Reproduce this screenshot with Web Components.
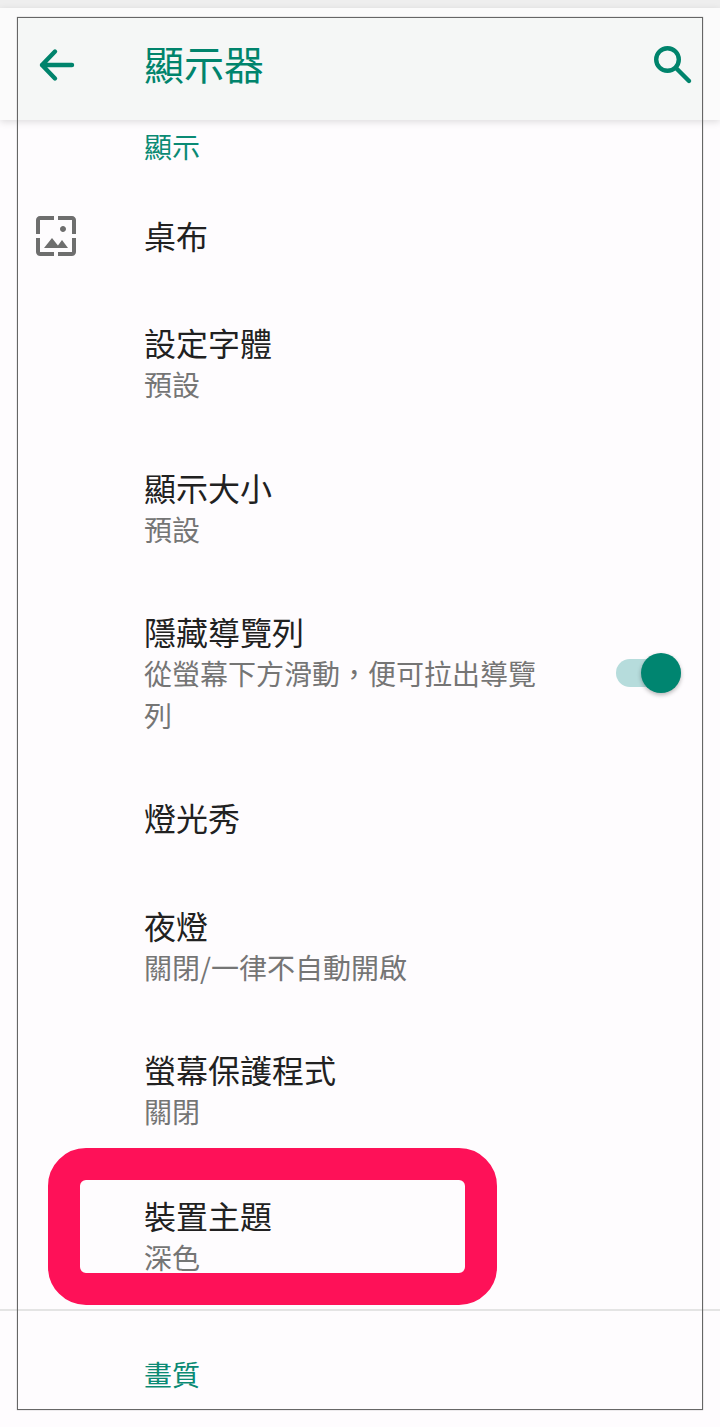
<!DOCTYPE html>
<html lang="zh-Hant">
<head>
<meta charset="utf-8">
<title>顯示器</title>
<style>
    html, body {
        margin: 0;
        padding: 0;
        background: #fefcfe;
    }
    body {
        position: relative;
        width: 720px;
        height: 1427px;
        overflow: hidden;
        font-family: "Noto Sans CJK TC", "Noto Sans", sans-serif;
    }
</style>
</head>
<body>
<display-screen>
    <app-bar title="顯示器"></app-bar>
    <section-label>顯示</section-label>
    <setting-row title="桌布" pad="35">
        <svg slot="icon" style="margin-top: 2px" width="48" height="48" viewBox="0 0 24 24" fill="#6e6e6e"><path d="M4 4h7V2H4c-1.1 0-2 .9-2 2v7h2V4zm6 9l-4 5h12l-3-4-2.03 2.71L10 13zm7-4.5c0-.83-.67-1.5-1.5-1.5S14 7.67 14 8.5s.67 1.5 1.5 1.5S17 9.33 17 8.5zM20 2h-7v2h7v7h2V4c0-1.1-.9-2-2-2zm0 18h-7v2h7c1.1 0 2-.9 2-2v-7h-2v7zM4 13H2v7c0 1.1.9 2 2 2h7v-2H4v-7z"/></svg>
    </setting-row>
    <setting-row title="設定字體" summary="預設"></setting-row>
    <setting-row title="顯示大小" summary="預設"></setting-row>
    <setting-row title="隱藏導覽列" summary="從螢幕下方滑動，便可拉出導覽列">
        <toggle-switch slot="end"></toggle-switch>
    </setting-row>
    <setting-row title="燈光秀" pad="29.5" pad-bottom="35.5"></setting-row>
    <setting-row title="夜燈" summary="關閉/一律不自動開啟"></setting-row>
    <setting-row title="螢幕保護程式" summary="關閉"></setting-row>
    <setting-row title="裝置主題" summary="深色" pad="31.5" pad-bottom="30.5"></setting-row>
    <section-label divided>畫質</section-label>
</display-screen>
<screen-frame></screen-frame>
<highlight-box></highlight-box>

<script>
class DisplayScreen extends HTMLElement {
    constructor() {
        super();
        this.attachShadow({ mode: 'open' });
        this.shadowRoot.innerHTML = `
            <style>
                :host {
                    display: block;
                    padding-top: 8px;
                    background: linear-gradient(#eeeeee, #eeeeee) top / 100% 8px no-repeat;
                }
            </style>
            <slot></slot>
        `;
    }
}

class AppBar extends HTMLElement {
    constructor() {
        super();
        this.attachShadow({ mode: 'open' });
        this.shadowRoot.innerHTML = `
            <style>
                :host {
                    display: flex;
                    align-items: center;
                    position: relative;
                    z-index: 1;
                    height: 112px;
                    box-sizing: border-box;
                    padding: 0 24px 0 32px;
                    background: linear-gradient(#f5f7f6, #f5f7f6) 18px 10px / 684px 100% no-repeat, #fbfbfb;
                    box-shadow: 0 2px 7px rgba(0,0,0,0.13);
                }
                .back, .search {
                    width: 48px;
                    height: 48px;
                    flex: none;
                    margin-top: 2px;
                }
                h1 {
                    flex: 1;
                    margin: -2px 0 0 64px;
                    font-size: 40px;
                    line-height: 56px;
                    font-weight: 400;
                    color: #00846c;
                }
            </style>
            <svg class="back" viewBox="0 0 48 48" fill="none" stroke="#00846c" stroke-width="4.4" stroke-linecap="round" stroke-linejoin="round">
                <path d="M10 24H40M23 10.5L10 24L23 37.5"/>
            </svg>
            <h1></h1>
            <svg class="search" viewBox="0 0 48 48" fill="none" stroke="#00846c" stroke-width="4.4" stroke-linecap="round">
                <circle cx="19.5" cy="18.5" r="11.3"/>
                <path d="M28 27L41 40"/>
            </svg>
        `;
        this.shadowRoot.querySelector('h1').textContent = this.getAttribute('title');
    }
}

class SectionLabel extends HTMLElement {
    constructor() {
        super();
        this.attachShadow({ mode: 'open' });
        this.shadowRoot.innerHTML = `
            <style>
                :host {
                    display: block;
                    height: 59px;
                    box-sizing: border-box;
                    padding: 6px 0 0 144px;
                    font-size: 28px;
                    line-height: 40px;
                    color: #0a8a74;
                }
                :host([divided]) {
                    height: 118px;
                    padding-top: 43px;
                    border-top: 2px solid #e4e4e4;
                }
            </style>
            <slot></slot>
        `;
    }
}

class SettingRow extends HTMLElement {
    constructor() {
        super();
        this.attachShadow({ mode: 'open' });
        this.shadowRoot.innerHTML = `
            <style>
                :host {
                    display: flex;
                    align-items: center;
                    box-sizing: border-box;
                    padding: 30.25px 39px 30.25px 32px;
                }
                .icon {
                    flex: none;
                    width: 48px;
                    height: 42px;
                    margin-right: 64px;
                    display: flex;
                    align-items: center;
                    align-self: flex-start;
                }
                .text {
                    width: 400px;
                    flex: none;
                }
                .title {
                    font-size: 32px;
                    line-height: 42px;
                    color: #212121;
                }
                .summary {
                    font-size: 28px;
                    line-height: 42px;
                    color: #757575;
                }
                .summary:empty { display: none; }
                .end {
                    flex: 1;
                    display: flex;
                    justify-content: flex-end;
                }
            </style>
            <div class="icon"><slot name="icon"></slot></div>
            <div class="text">
                <div class="title"></div>
                <div class="summary"></div>
            </div>
            <div class="end"><slot name="end"></slot></div>
        `;
        this.shadowRoot.querySelector('.title').textContent = this.getAttribute('title');
        this.shadowRoot.querySelector('.summary').textContent = this.getAttribute('summary') || '';
        if (this.hasAttribute('pad')) this.style.paddingTop = this.getAttribute('pad') + 'px';
        const bottom = this.getAttribute('pad-bottom') || this.getAttribute('pad');
        if (bottom) this.style.paddingBottom = bottom + 'px';
    }
}

class ToggleSwitch extends HTMLElement {
    constructor() {
        super();
        this.attachShadow({ mode: 'open' });
        this.shadowRoot.innerHTML = `
            <style>
                :host {
                    display: block;
                    position: relative;
                    width: 65px;
                    height: 28px;
                    border-radius: 14px;
                    background: #b6dcdc;
                }
                .thumb {
                    position: absolute;
                    right: 0;
                    top: -6px;
                    width: 40px;
                    height: 40px;
                    border-radius: 50%;
                    background: #008570;
                    box-shadow: 0 2px 4px rgba(0,0,0,0.28);
                }
            </style>
            <div class="thumb"></div>
        `;
    }
}

class ScreenFrame extends HTMLElement {
    constructor() {
        super();
        this.attachShadow({ mode: 'open' });
        this.shadowRoot.innerHTML = `
            <style>
                :host {
                    position: absolute;
                    z-index: 2;
                    left: 17px;
                    top: 17px;
                    width: 686px;
                    height: 1393px;
                    box-sizing: border-box;
                    border: 1px solid #666666;
                    box-shadow: 0 0 1px rgba(90,90,90,0.6);
                    pointer-events: none;
                }
            </style>
        `;
    }
}

class HighlightBox extends HTMLElement {
    constructor() {
        super();
        this.attachShadow({ mode: 'open' });
        this.shadowRoot.innerHTML = `
            <style>
                :host {
                    position: absolute;
                    z-index: 3;
                    left: 48px;
                    top: 1148px;
                    width: 449px;
                    height: 157px;
                    box-sizing: border-box;
                    border: 32.5px solid #fe1158;
                    border-radius: 38px;
                    pointer-events: none;
                }
            </style>
        `;
    }
}

customElements.define('display-screen', DisplayScreen);
customElements.define('app-bar', AppBar);
customElements.define('section-label', SectionLabel);
customElements.define('setting-row', SettingRow);
customElements.define('toggle-switch', ToggleSwitch);
customElements.define('screen-frame', ScreenFrame);
customElements.define('highlight-box', HighlightBox);
</script>
</body>
</html>
